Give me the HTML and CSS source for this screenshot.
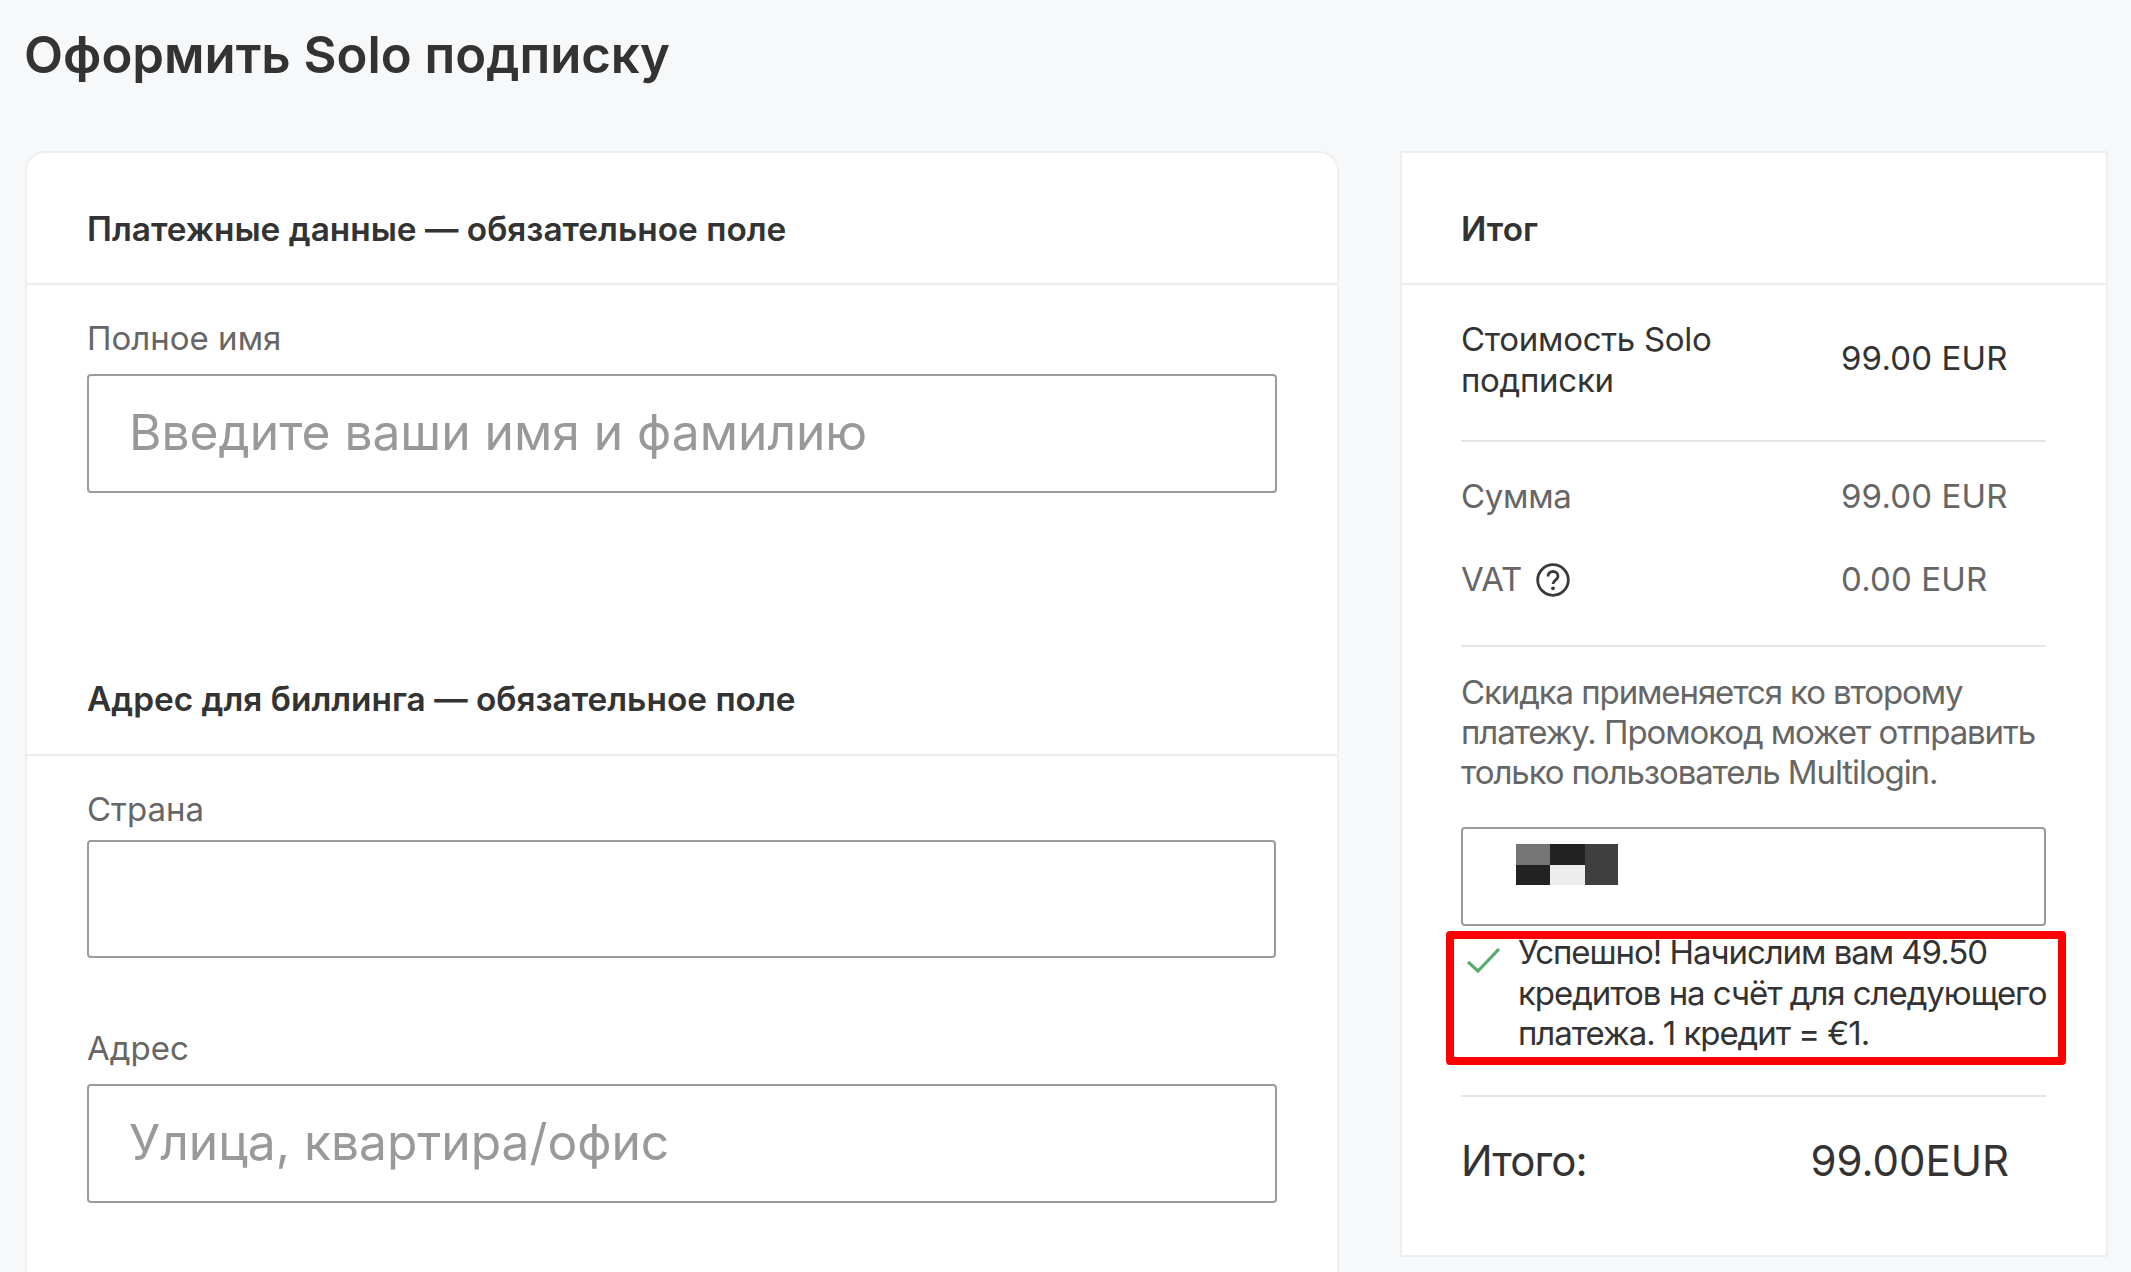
FILE: index.html
```html
<!DOCTYPE html>
<html lang="ru">
<head>
<meta charset="utf-8">
<title>Оформить Solo подписку</title>
<link rel="stylesheet" href="styles.css">
</head>
<body>
<h1 class="page-title">Оформить Solo подписку</h1>
<main class="layout">
  <section class="card card-form">
    <h2 class="card-head">Платежные данные — обязательное поле</h2>
    <div class="card-body">
      <div class="field">
        <div class="field-label">Полное имя</div>
        <div class="input input-name"><span class="placeholder">Введите ваши имя и фамилию</span></div>
      </div>
    </div>
    <h2 class="card-head card-head-second">Адрес для биллинга — обязательное поле</h2>
    <div class="card-body card-body-second">
      <div class="field">
        <div class="field-label field-label-tight">Страна</div>
        <div class="input input-country"></div>
      </div>
      <div class="field field-address">
        <div class="field-label">Адрес</div>
        <div class="input input-address"><span class="placeholder">Улица, квартира/офис</span></div>
      </div>
    </div>
  </section>
  <aside class="card card-summary">
    <h2 class="card-head">Итог</h2>
    <div class="summary-body">
      <div class="row row-plan">
        <div class="row-name row-name-plan">Стоимость Solo<br>подписки</div>
        <div class="row-value row-value-raised">99.00 EUR</div>
      </div>
      <div class="row-group">
        <div class="row row-muted"><div class="row-name">Сумма</div><div class="row-value">99.00 EUR</div></div>
        <div class="row row-muted row-vat">
          <div class="row-name vat-label">VAT
            <svg class="help-icon" viewBox="0 0 34 34" aria-hidden="true">
              <circle cx="17" cy="17" r="15.300" fill="none" stroke="#3a3a3a" stroke-width="2.800"/>
              <path d="M12 13.500c0-3 2.200-5 5-5s5 2 5 4.700c0 3.800-5 4-5 7.800" fill="none" stroke="#3a3a3a" stroke-width="2.800"/>
              <circle cx="17" cy="25.300" r="1.900" fill="#3a3a3a"/>
            </svg>
          </div>
          <div class="row-value">0.00 EUR</div>
        </div>
      </div>
      <p class="note">Скидка применяется ко второму платежу. Промокод может отправить только пользователь Multilogin.</p>
      <div class="input input-promo">
        <div class="mosaic">
          <span class="m1"></span><span class="m2"></span><span class="m3"></span>
          <span class="m2"></span><span class="m4"></span>
        </div>
      </div>
      <div class="success">
        <svg class="check" viewBox="0 0 33 25" aria-hidden="true">
          <path d="M1 14l10 9L32 1" fill="none" stroke="#5aab6e" stroke-width="3.200"/>
        </svg>
        <div class="success-text">Успешно! Начислим вам 49.50 кредитов на счёт для следующего платежа. 1 кредит = €1.</div>
      </div>
      <div class="total">
        <div class="total-name">Итого:</div>
        <div>99.00EUR</div>
      </div>
    </div>
  </aside>
</main>
</body>
</html>
```
FILE: styles.css
```css
* { box-sizing: border-box; }
html, body { height: 1272px; overflow: hidden; }
body {
  margin: 0;
  padding: 0 23px 0 25px;
  background: #f7f8fa;
  color: #333;
  font-family: "Inter", "Liberation Sans", sans-serif;
}
.page-title {
  margin: 0 0 0 -1px;
  height: 151px;
  padding-top: 27px;
  font-size: 50.800px;
  line-height: 56px;
  font-weight: 600;
  color: #333;
}
.layout {
  display: grid;
  grid-template-columns: 1314px 708px;
  column-gap: 61px;
  align-items: start;
}
.card {
  background: #fff;
  border: 2px solid #eeeff1;
}
.card-form {
  height: 1300px;
  border-radius: 20px 20px 0 0;
}
.card-summary { height: 1106px; }
.card-head {
  margin: 0;
  height: 132px;
  padding: 56px 60px 0;
  font-size: 33.400px;
  line-height: 40px;
  font-weight: 600;
  color: #333;
  border-bottom: 2px solid #ececec;
}
.card-summary .card-head { padding-left: 59px; }
.card-body { padding: 33px 60px 0; }
.card-head-second { margin-top: 129px; height: 134px; padding-top: 57px; }
.card-body-second { padding-top: 33px; }
.field-label {
  height: 40px;
  margin-bottom: 16px;
  font-size: 33px;
  line-height: 40px;
  color: #666;
}
.field-label-tight { margin-bottom: 11px; }
.field-address { margin-top: 70px; }
.input {
  display: flex;
  align-items: center;
  background: #fff;
  border: 2px solid #9b9b9b;
  border-radius: 4px;
  height: 119px;
  padding-left: 40px;
}
.input-country { width: 1189px; height: 118px; }
.placeholder {
  margin-bottom: 4px;
  font-size: 49.700px;
  line-height: 56px;
  color: #999;
}
.summary-body { padding: 0 60px 0 59px; }
.row {
  display: grid;
  grid-template-columns: 380px 1fr;
  align-items: center;
  font-size: 33px;
  line-height: 41px;
  color: #333;
}
.row-name { letter-spacing: -0.300px; }
.row-name-plan { line-height: 40.500px; }
.row-value { letter-spacing: 0.150px; }
.row-value-raised { margin-bottom: 2px; }
.row-plan {
  padding: 34px 0 40px;
  border-bottom: 2px solid #e5e5e5;
}
.row-group {
  padding: 34px 0 45px;
  border-bottom: 2px solid #e5e5e5;
}
.row-muted { color: #666; }
.row-vat { margin-top: 42px; }
.vat-label { display: flex; align-items: center; gap: 14px; }
.help-icon { width: 34px; height: 34px; flex: none; }
.note {
  margin: 25px 0 0;
  font-size: 33px;
  line-height: 40px;
  letter-spacing: -1.100px;
  color: #666;
}
.input-promo {
  display: block;
  height: 99px;
  margin-top: 35px;
  padding: 15px 0 0 53px;
}
.mosaic {
  display: grid;
  grid-template-columns: 34px 35px 33px;
  grid-template-rows: 21px 20px;
  width: 102px;
}
.m1 { background: #757575; }
.m2 { background: #222; }
.m3 { background: #3f3f3f; grid-column: 3; grid-row: 1 / span 2; }
.m4 { background: #ededed; }
.success {
  display: flex;
  align-items: flex-start;
  margin: 5px -20px 0 -15px;
  border: 8px solid #ff0000;
  border-radius: 4px;
  height: 134px;
  padding-left: 13px;
}
.check { width: 33px; height: 25px; flex: none; margin: 9px 18px 0 0; }
.success-text {
  margin-top: -7px;
  font-size: 33px;
  line-height: 40.500px;
  letter-spacing: -1.050px;
  color: #333;
}
.total {
  display: flex;
  justify-content: space-between;
  margin-top: 30px;
  padding: 39px 37px 0 0;
  border-top: 2px solid #e5e5e5;
  font-size: 42px;
  line-height: 50px;
  color: #333;
}
.total-name { letter-spacing: -0.900px; }
```
